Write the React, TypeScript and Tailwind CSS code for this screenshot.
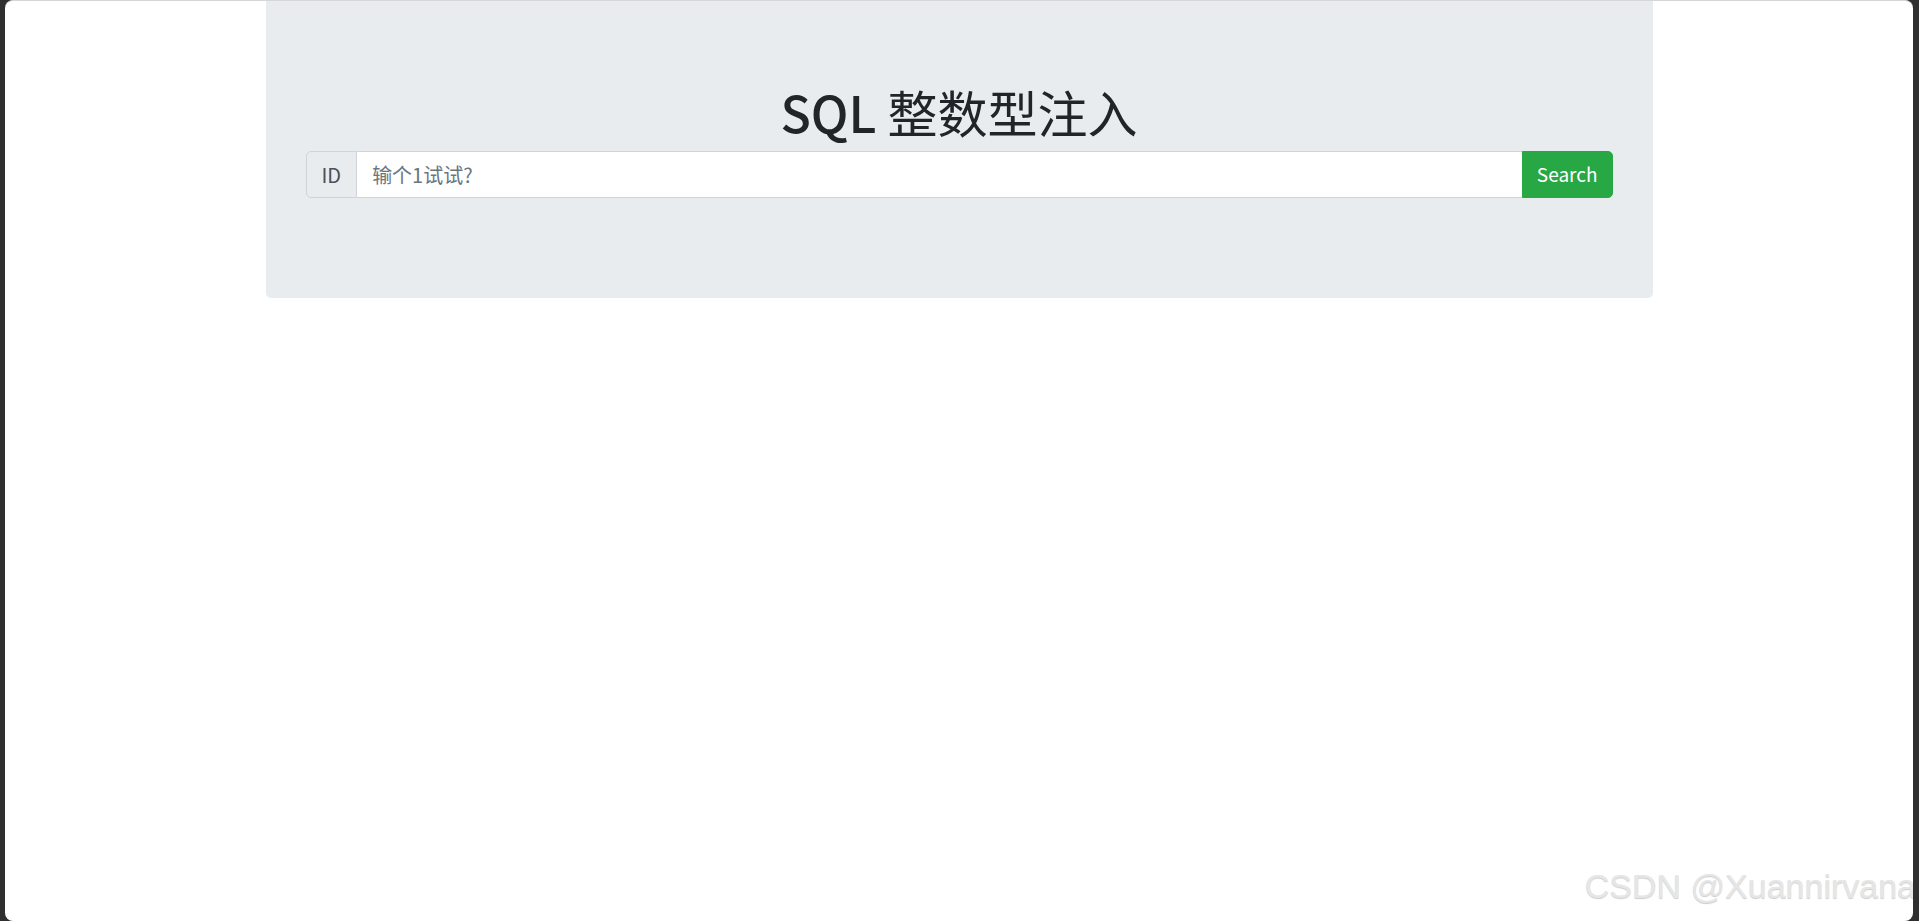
export default function App() {
  return (
    <div className="flex h-[921px] w-full overflow-hidden bg-[#2f2f2f] pl-[5px] pr-[6px]">
      <div
        className="relative flex-1 overflow-hidden rounded-[8px] border-t border-[#d6d6d6] bg-white"
        style={{ fontFamily: '"Noto Sans CJK SC", "Open Sans", sans-serif' }}
      >
        <div className="mx-auto w-[1387px] rounded-b-[5px] bg-[#e9ecef] px-[40px] pt-[80px] pb-[80px]">
          <h1 className="mb-[10px] text-center text-[50px] leading-[60px] font-normal text-[#212529]">
            <span className="font-medium">SQL</span> 整数型注入
          </h1>
          <form className="mb-[20px] flex h-[47px] w-full text-[20px]">
            <span className="flex items-center rounded-l-[5px] border border-[#ced4da] bg-[#e9ecef] px-[15px] text-[#495057]">
              ID
            </span>
            <input
              type="text"
              placeholder="输个1试试?"
              className="min-w-0 flex-1 border-y border-[#ced4da] bg-white px-[15px] text-[#495057] outline-none placeholder:text-[#6c757d]"
            />
            <button
              type="button"
              className="rounded-r-[5px] border border-[#28a745] bg-[#28a745] px-[14px] text-[19px] text-white"
            >
              Search
            </button>
          </form>
        </div>

        {/* csdn watermark */}
        <div
          className="absolute right-[-3px] bottom-[18px] text-[34px] leading-none text-[#e6e6e6]"
          style={{
            fontFamily: '"Liberation Sans", Arial, sans-serif',
            textShadow: '0 1px 1px rgba(0,0,0,0.2)',
          }}
        >
          CSDN @Xuannirvana
        </div>
      </div>
    </div>
  );
}
